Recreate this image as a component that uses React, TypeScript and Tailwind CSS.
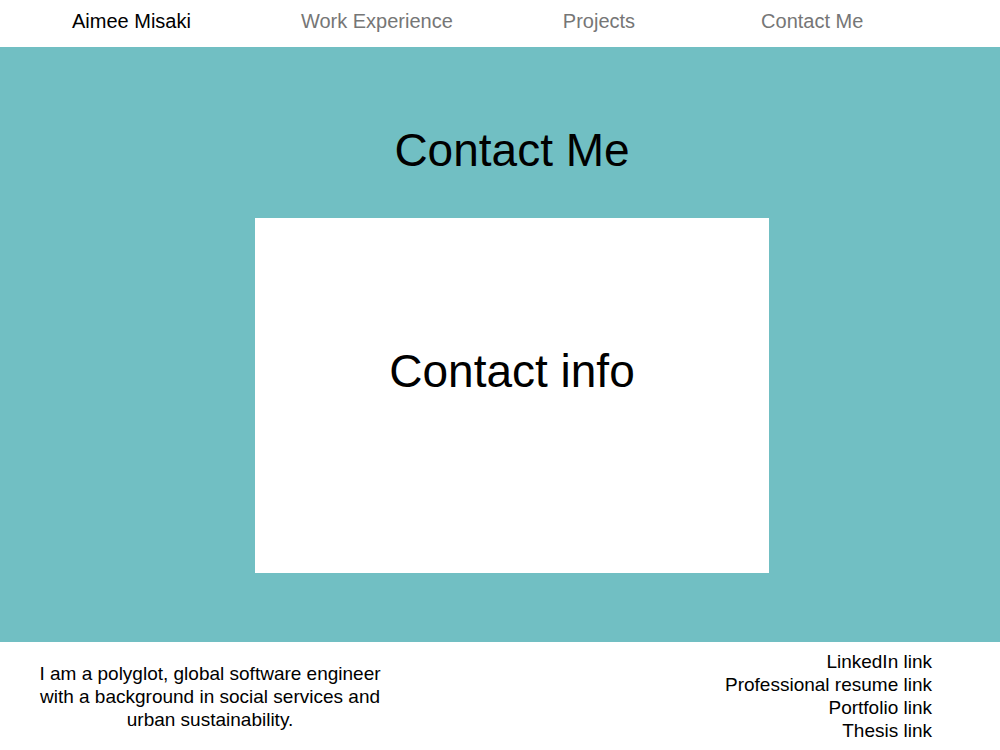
const navLinks = ['Work Experience', 'Projects', 'Contact Me'];

const footerLinks = ['LinkedIn link', 'Professional resume link', 'Portfolio link', 'Thesis link'];

export default function App() {
  return (
    <div className="min-h-screen bg-white font-['Liberation_Sans',Arial,sans-serif] text-black">
      <nav className="flex h-[47px] items-start pt-[10px] text-[20px] leading-[23px]">
        <a className="ml-[72px] text-black">Aimee Misaki</a>
        <a className="ml-[110px] text-[#767676]">{navLinks[0]}</a>
        <a className="ml-[110px] text-[#767676]">{navLinks[1]}</a>
        <a className="ml-[126px] text-[#767676]">{navLinks[2]}</a>
      </nav>

      <section className="flex h-[595px] flex-col items-center bg-[#71bfc3] pt-[77px] pl-[24px]">
        <h1 className="text-[46px] leading-[53px]">Contact Me</h1>
        <div className="mt-[41px] flex h-[355px] w-[514px] justify-center bg-white pt-[127px]">
          <h2 className="text-[46px] leading-[53px]">Contact info</h2>
        </div>
      </section>

      <footer className="flex items-center justify-between py-2 text-[19px] leading-[23px]">
        <p className="ml-[35px] w-[350px] text-center">
          I am a polyglot, global software engineer with a background in social services and
          urban sustainability.
        </p>
        <ul className="mr-[68px] text-right">
          {footerLinks.map((link) => (
            <li key={link}>
              <a>{link}</a>
            </li>
          ))}
        </ul>
      </footer>
    </div>
  );
}
